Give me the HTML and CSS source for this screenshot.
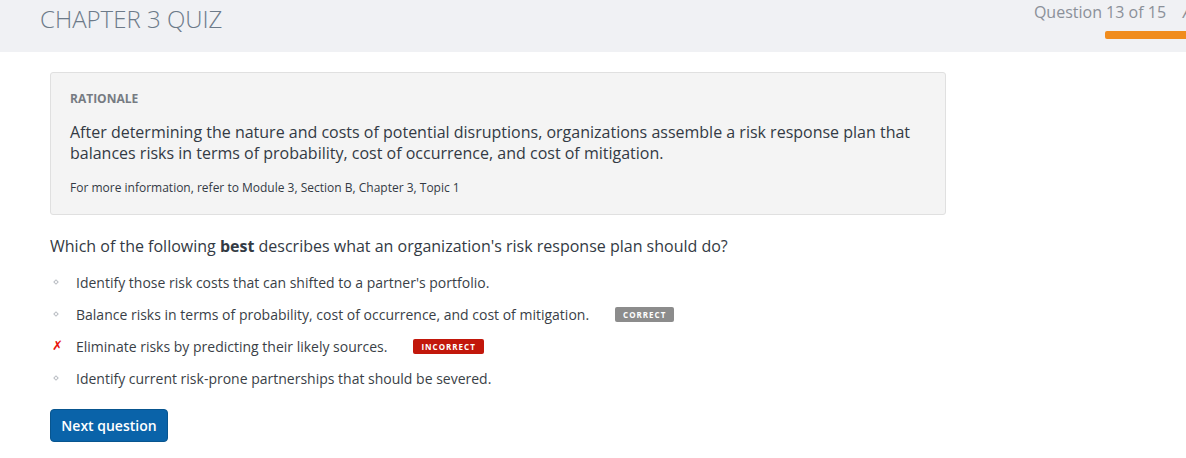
FILE: index.html
```html
<!DOCTYPE html>
<html>
<head>
<meta charset="utf-8">
<link rel="stylesheet" href="styles.css">
</head>
<body>
<header class="topbar">
  <h1 class="title">CHAPTER 3 QUIZ</h1>
  <div class="progress">
    <div class="progress-text"><span>Question 13 of 15</span><span class="cut">A</span></div>
    <div class="progress-bar"></div>
  </div>
</header>
<main class="content">
  <section class="rationale">
    <div class="rationale-label">RATIONALE</div>
    <p class="rationale-text">After determining the nature and costs of potential disruptions, organizations assemble a risk response plan that balances risks in terms of probability, cost of occurrence, and cost of mitigation.</p>
    <p class="rationale-ref">For more information, refer to Module 3, Section B, Chapter 3, Topic 1</p>
  </section>
  <p class="question">Which of the following <b>best</b> describes what an organization's risk response plan should do?</p>
  <ul class="options">
    <li class="option"><span class="mark"><span class="diamond"></span></span><span class="opt-text">Identify those risk costs that can shifted to a partner's portfolio.</span></li>
    <li class="option"><span class="mark"><span class="diamond"></span></span><span class="opt-text">Balance risks in terms of probability, cost of occurrence, and cost of mitigation.</span><span class="badge badge-correct">CORRECT</span></li>
    <li class="option"><span class="mark"><span class="xmark">✗</span></span><span class="opt-text">Eliminate risks by predicting their likely sources.</span><span class="badge badge-incorrect">INCORRECT</span></li>
    <li class="option"><span class="mark"><span class="diamond"></span></span><span class="opt-text">Identify current risk-prone partnerships that should be severed.</span></li>
  </ul>
  <button class="next-btn">Next question</button>
</main>
</body>
</html>
```
FILE: styles.css
```css
* { box-sizing: border-box; }
html, body { margin: 0; padding: 0; background: #ffffff; }
body {
  font-family: "Open Sans", "Noto Sans", "Liberation Sans", sans-serif;
  color: #333a42;
  width: 1186px;
  height: 458px;
  overflow: hidden;
}
.topbar {
  height: 52px;
  background: #f0f1f4;
  display: flex;
  justify-content: space-between;
  align-items: flex-start;
  overflow: hidden;
}
.title {
  margin: 0;
  padding: 4px 0 0 40px;
  font-size: 24px;
  font-weight: 300;
  color: #6c7a89;
  line-height: 30px;
  letter-spacing: 0;
}
.progress {
  display: flex;
  flex-direction: column;
  align-items: flex-end;
  padding-top: 1px;
  margin-right: -6px;
}
.progress-text {
  display: flex;
  gap: 17px;
  font-size: 16px;
  color: #8b9099;
  line-height: 22px;
  white-space: nowrap;
}
.cut { font-style: italic; color: #8b9099; }
.progress-bar {
  margin-top: 8px;
  margin-right: 6px;
  width: 81px;
  height: 8px;
  background: #f08c1e;
  border-radius: 2px 0 0 2px;
}
.content {
  padding: 20px 0 0 50px;
}
.rationale {
  width: 896px;
  height: 143px;
  background: #f4f4f4;
  border: 1px solid #e0e0e0;
  border-radius: 3px;
  padding: 18px 20px 0 19px;
}
.rationale-label {
  font-size: 12px;
  font-weight: 700;
  color: #767b82;
  line-height: 16px;
}
.rationale-text {
  margin: 15px 0 0 0;
  font-size: 16px;
  line-height: 21px;
  color: #333a44;
}
.rationale-ref {
  margin: 16px 0 0 0;
  font-size: 12px;
  line-height: 16px;
  color: #333a44;
}
.question {
  margin: 20px 0 0 0;
  font-size: 16px;
  line-height: 22px;
  color: #333a44;
}
.question b { font-weight: 700; }
.options {
  list-style: none;
  margin: 15px 0 0 0;
  padding: 0;
  display: flex;
  flex-direction: column;
  gap: 12px;
}
.option {
  display: flex;
  align-items: center;
  height: 20px;
  font-size: 14px;
  color: #3a3f47;
}
.mark {
  width: 26px;
  display: flex;
  align-items: center;
  justify-content: flex-start;
  padding-left: 4px;
}
.diamond {
  width: 4px;
  height: 4px;
  border: 1px solid #b8bcc2;
  transform: rotate(45deg);
  display: block;
}
.xmark {
  color: #e8150c;
  font-size: 13px;
  font-weight: 700;
  font-style: italic;
  font-family: "DejaVu Sans", sans-serif;
  line-height: 14px;
  margin-left: -2px;
}
.badge {
  display: inline-block;
  color: #ffffff;
  font-size: 8px;
  font-weight: 700;
  letter-spacing: 1px;
  line-height: 15px;
  height: 15px;
  padding: 0 8px;
  border-radius: 2px;
}
.badge-correct { background: #8c8c8c; margin-left: 26px; }
.badge-incorrect { background: #c2170b; margin-left: 26px; }
.next-btn {
  margin-top: 21px;
  font-family: inherit;
  font-size: 14px;
  font-weight: 600;
  color: #ffffff;
  background: #0a63a9;
  border: 1px solid #08558f;
  border-radius: 4px;
  width: 118px;
  height: 33px;
  padding: 0;
  cursor: pointer;
}
```
